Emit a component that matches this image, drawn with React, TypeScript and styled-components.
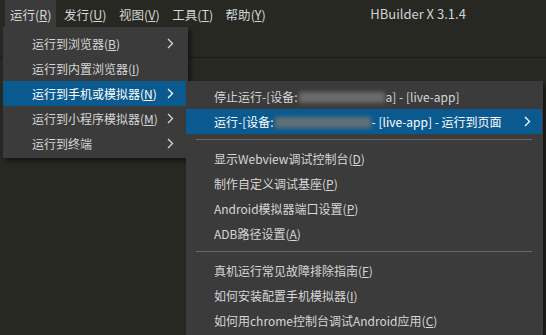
import React, { FC } from "react";
import styled, { createGlobalStyle } from "styled-components";

const GlobalStyle = createGlobalStyle`
  html, body {
    margin: 0;
    padding: 0;
    background: #272822;
  }
  * {
    box-sizing: border-box;
  }
`;

interface MenuEntry {
  label: string;
  key?: string;
  sub?: boolean;
  active?: boolean;
}

const topMenus: MenuEntry[] = [
  { label: "运行", key: "R", active: true },
  { label: "发行", key: "U" },
  { label: "视图", key: "V" },
  { label: "工具", key: "T" },
  { label: "帮助", key: "Y" },
];

const runMenu: MenuEntry[] = [
  { label: "运行到浏览器", key: "B", sub: true },
  { label: "运行到内置浏览器", key: "I" },
  { label: "运行到手机或模拟器", key: "N", sub: true, active: true },
  { label: "运行到小程序模拟器", key: "M", sub: true },
  { label: "运行到终端", sub: true },
];

const toolItems: MenuEntry[] = [
  { label: "显示Webview调试控制台", key: "D" },
  { label: "制作自定义调试基座", key: "P" },
  { label: "Android模拟器端口设置", key: "P" },
  { label: "ADB路径设置", key: "A" },
];

const helpItems: MenuEntry[] = [
  { label: "真机运行常见故障排除指南", key: "F" },
  { label: "如何安装配置手机模拟器", key: "I" },
  { label: "如何用chrome控制台调试Android应用", key: "C" },
];

const Chevron: FC = () => (
  <Arrow width="7" height="11" viewBox="0 0 7 11">
    <polyline
      points="1,1 5.5,5.5 1,10"
      fill="none"
      stroke="currentColor"
      strokeWidth="1.3"
    />
  </Arrow>
);

const Label: FC<{ item: MenuEntry }> = ({ item }) => (
  <span>
    {item.label}
    {item.key && (
      <>
        (<u>{item.key}</u>)
      </>
    )}
  </span>
);

const App: FC = () => {
  return (
    <Window>
      <GlobalStyle />
      <MenuBar>
        {topMenus.map((m) => (
          <TopItem key={m.label} active={m.active}>
            <Label item={m} />
          </TopItem>
        ))}
        <AppTitle>HBuilder X 3.1.4</AppTitle>
      </MenuBar>
      <TabStrip />

      <Dropdown>
        {runMenu.map((m) => (
          <Row key={m.label} active={m.active}>
            <Label item={m} />
            {m.sub && <Chevron />}
            {m.active && (
              <SubMenu>
                <SubRow>
                  <span>
                    停止运行-[设备:<Blur w={86} />a] - [live-app]
                  </span>
                </SubRow>
                <SubRow active>
                  <span>
                    运行-[设备:<Blur w={96} />- [live-app] - 运行到页面
                  </span>
                  <Chevron />
                </SubRow>
                <Separator />
                {toolItems.map((t, i) => (
                  <SubRow key={i}>
                    <Label item={t} />
                  </SubRow>
                ))}
                <Separator />
                {helpItems.map((t, i) => (
                  <SubRow key={i}>
                    <Label item={t} />
                  </SubRow>
                ))}
              </SubMenu>
            )}
          </Row>
        ))}
      </Dropdown>
    </Window>
  );
};

interface ActiveProps {
  active?: boolean;
}

const Window = styled.div`
  position: relative;
  width: 546px;
  height: 335px;
  overflow: hidden;
  background: #272822;
  font-family: "Noto Sans CJK SC", "Noto Sans", sans-serif;
  font-size: 12px;
  color: #d4d4d4;
`;

const MenuBar = styled.div`
  display: flex;
  align-items: stretch;
  height: 27px;
  padding-left: 5px;
`;

const TopItem = styled.div<ActiveProps>`
  display: flex;
  align-items: center;
  padding: 1px 5px 0;
  margin-right: 2.5px;
  font-size: 12.5px;
  background: ${(p) => (p.active ? "#3b3b3b" : "transparent")};
  color: #d6d6d6;
`;

const AppTitle = styled.div`
  display: flex;
  align-items: center;
  margin-left: 97px;
  font-size: 13px;
  color: #cfd3d6;
`;

const TabStrip = styled.div`
  height: 31px;
  border-bottom: 1px solid #1b1c18;
`;

const Dropdown = styled.div`
  position: absolute;
  left: 3px;
  top: 27px;
  width: 185px;
  padding: 4px 0 2px;
  background: #3b3b3b;
  box-shadow: 3px 3px 4px rgba(0, 0, 0, 0.45);
  z-index: 2;
`;

const Row = styled.div<ActiveProps>`
  position: relative;
  display: flex;
  align-items: center;
  justify-content: space-between;
  height: 25px;
  padding: 0 12px 0 29px;
  margin-right: 2px;
  background: ${(p) => (p.active ? "#0b5a8f" : "transparent")};
  color: ${(p) => (p.active ? "#ffffff" : "#d6d6d6")};
  white-space: nowrap;
`;

const Arrow = styled.svg`
  display: block;
  flex-shrink: 0;
`;

const SubMenu = styled.div`
  position: absolute;
  left: 100%;
  top: 0;
  width: 357px;
  padding: 3px 0 2px;
  background: #3b3b3b;
  box-shadow: 3px 3px 4px rgba(0, 0, 0, 0.45);
  color: #d6d6d6;
  z-index: 3;
`;

const SubRow = styled.div<ActiveProps>`
  display: flex;
  align-items: center;
  justify-content: space-between;
  height: 25px;
  padding: 0 11px 0 28px;
  margin-right: 1px;
  background: ${(p) => (p.active ? "#0b5a8f" : "transparent")};
  color: ${(p) => (p.active ? "#ffffff" : "#d6d6d6")};
  white-space: nowrap;
`;

const Separator = styled.div`
  height: 1px;
  margin: 5px 11px 6px 10px;
  background: #666666;
`;

const Blur = styled.span<{ w: number }>`
  display: inline-block;
  width: ${(p) => p.w}px;
  height: 11px;
  margin: 0 1px;
  vertical-align: -1px;
  background: #737373;
  filter: blur(2px);
  opacity: 0.85;
`;

export default App;
